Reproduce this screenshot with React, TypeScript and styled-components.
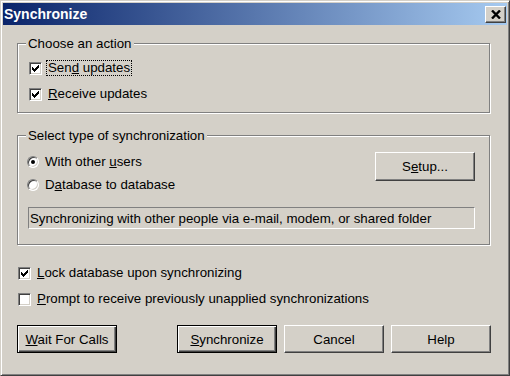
import React from "react";
import styled, { createGlobalStyle, css } from "styled-components";

const GlobalStyle = createGlobalStyle`
  html, body {
    margin: 0;
    padding: 0;
    background: #d4d0c8;
  }
`;

const Window = styled.div`
  width: 510px;
  height: 376px;
  box-sizing: border-box;
  background: #d4d0c8;
  border: 1px solid;
  border-color: #d4d0c8 #404040 #404040 #d4d0c8;
  box-shadow: inset 1px 1px #fff, inset -1px -1px #808080;
  padding: 2px;
  display: flex;
  flex-direction: column;
  font-family: "Liberation Sans", Arial, sans-serif;
  font-size: 13.3px;
  color: #000;
`;

const TitleBar = styled.div`
  height: 22px;
  flex: none;
  display: flex;
  align-items: center;
  justify-content: space-between;
  padding: 0 1px;
  background: linear-gradient(to right, #0a246a, #a6caf0);
`;

const Title = styled.span`
  color: #fff;
  font-weight: bold;
  font-size: 14px;
  line-height: 16px;
`;

const bevel = css`
  background: #d4d0c8;
  border: 1px solid;
  border-color: #fff #404040 #404040 #fff;
  box-shadow: inset -1px -1px #808080, inset 1px 1px #d4d0c8;
`;

const CloseButton = styled.button`
  ${bevel};
  width: 21px;
  height: 17px;
  padding: 0;
  display: flex;
  align-items: center;
  justify-content: center;
`;

const Body = styled.div`
  padding: 11px 16px 0 14px;
  display: flex;
  flex-direction: column;
`;

const Group = styled.fieldset`
  margin: 0;
  padding: 0;
  width: 473px;
  min-width: 0;
  box-sizing: border-box;
  border: 1px solid #808080;
  box-shadow: 1px 1px 0 #fff, inset 1px 1px 0 #fff;
  & + & {
    margin-top: 15px;
  }
`;

const Legend = styled.legend`
  margin-left: 8px;
  padding: 0 2px;
  line-height: 15px;
  background: #d4d0c8;
`;

const ActionList = styled.div`
  padding: 4px 0 5px 11px;
`;

const Row = styled.label<{ $h: number }>`
  display: flex;
  align-items: center;
  gap: 5px;
  height: ${(p) => p.$h}px;
`;

const Box = styled.span`
  width: 13px;
  height: 13px;
  flex: none;
  box-sizing: border-box;
  background: #fff;
  border: 1px solid;
  border-color: #808080 #fff #fff #808080;
  box-shadow: inset 1px 1px #404040, inset -1px -1px #d4d0c8;
  display: flex;
  align-items: center;
  justify-content: center;
`;

const Radio = styled.span<{ $on?: boolean }>`
  width: 12px;
  height: 12px;
  flex: none;
  box-sizing: border-box;
  border-radius: 50%;
  background: #fff;
  border: 1px solid;
  border-color: #808080 #fff #fff #808080;
  box-shadow: inset 1px 1px #404040, inset -1px -1px #d4d0c8;
  display: flex;
  align-items: center;
  justify-content: center;
  &::after {
    content: "";
    width: 4px;
    height: 4px;
    border-radius: 50%;
    background: ${(p) => (p.$on ? "#000" : "transparent")};
  }
`;

const Text = styled.span<{ $focus?: boolean }>`
  padding: 0 1px;
  line-height: 14px;
  white-space: nowrap;
  ${(p) =>
    p.$focus &&
    css`
      outline: 1px dotted #000;
    `}
`;

const SyncGrid = styled.div`
  display: grid;
  grid-template-columns: 1fr 100px;
  padding: 7px 14px 15px 9px;
`;

const Button = styled.button<{ $default?: boolean }>`
  ${bevel};
  width: 100px;
  height: 28px;
  padding: 0;
  font: inherit;
  color: #000;
  text-align: center;
  ${(p) =>
    p.$default &&
    css`
      border: 1px solid #000;
      box-shadow: inset 1px 1px #fff, inset -1px -1px #404040,
        inset -2px -2px #808080;
    `}
`;

const SetupButton = styled(Button)`
  height: 29px;
  margin-top: 2px;
  align-self: start;
`;

const Status = styled.div`
  grid-column: 1 / -1;
  margin: 11px 0 0 1px;
  height: 22px;
  box-sizing: border-box;
  border: 1px solid;
  border-color: #808080 #fff #fff #808080;
  padding: 0 1px;
  display: flex;
  align-items: center;
  white-space: nowrap;
  overflow: hidden;
`;

const Options = styled.div`
  margin-top: 15px;
  padding-left: 1px;
`;

const ButtonRow = styled.div`
  display: flex;
  justify-content: space-between;
  margin-top: 13px;
`;

const ButtonGroup = styled.div`
  display: flex;
  gap: 7px;
`;

// check glyph, one rect per pixel run
const checkRows = [
  [6, 1], [5, 2], [0, 1], [4, 3], [0, 2], [3, 3], [0, 5], [1, 3], [2, 1],
];
const checkY = [0, 1, 2, 2, 3, 3, 4, 5, 6];

const CheckMark = () => (
  <svg width="7" height="7" viewBox="0 0 7 7" shapeRendering="crispEdges">
    {checkRows.map(([x, w], i) => (
      <rect key={i} x={x} y={checkY[i]} width={w} height={1} fill="#000" />
    ))}
  </svg>
);

const Checkbox = ({ checked }: { checked?: boolean }) => (
  <Box>{checked && <CheckMark />}</Box>
);

const CloseIcon = () => (
  <svg width="10" height="9" viewBox="0 0 10 9">
    <path d="M1 0.5 L9 8.5 M9 0.5 L1 8.5" stroke="#000" strokeWidth="2.4" />
  </svg>
);

export default function App() {
  return (
    <>
      <GlobalStyle />
      <Window>
        <TitleBar>
          <Title>Synchronize</Title>
          <CloseButton>
            <CloseIcon />
          </CloseButton>
        </TitleBar>
        <Body>
          <Group>
            <Legend>Choose an action</Legend>
            <ActionList>
              <Row $h={26}>
                <Checkbox checked />
                <Text $focus>
                  Sen<u>d</u> updates
                </Text>
              </Row>
              <Row $h={26}>
                <Checkbox checked />
                <Text>
                  <u>R</u>eceive updates
                </Text>
              </Row>
            </ActionList>
          </Group>
          <Group>
            <Legend>Select type of synchronization</Legend>
            <SyncGrid>
              <div>
                <Row $h={23}>
                  <Radio $on />
                  <Text>
                    With other <u>u</u>sers
                  </Text>
                </Row>
                <Row $h={23}>
                  <Radio />
                  <Text>
                    D<u>a</u>tabase to database
                  </Text>
                </Row>
              </div>
              <SetupButton>
                S<u>e</u>tup...
              </SetupButton>
              <Status>
                Synchronizing with other people via e-mail, modem, or shared
                folder
              </Status>
            </SyncGrid>
          </Group>
          <Options>
            <Row $h={26}>
              <Checkbox checked />
              <Text>
                <u>L</u>ock database upon synchronizing
              </Text>
            </Row>
            <Row $h={26}>
              <Checkbox />
              <Text>
                <u>P</u>rompt to receive previously unapplied synchronizations
              </Text>
            </Row>
          </Options>
          <ButtonRow>
            <Button $default>
              <u>W</u>ait For Calls
            </Button>
            <ButtonGroup>
              <Button $default>
                <u>S</u>ynchronize
              </Button>
              <Button>Cancel</Button>
              <Button>Help</Button>
            </ButtonGroup>
          </ButtonRow>
        </Body>
      </Window>
    </>
  );
}
